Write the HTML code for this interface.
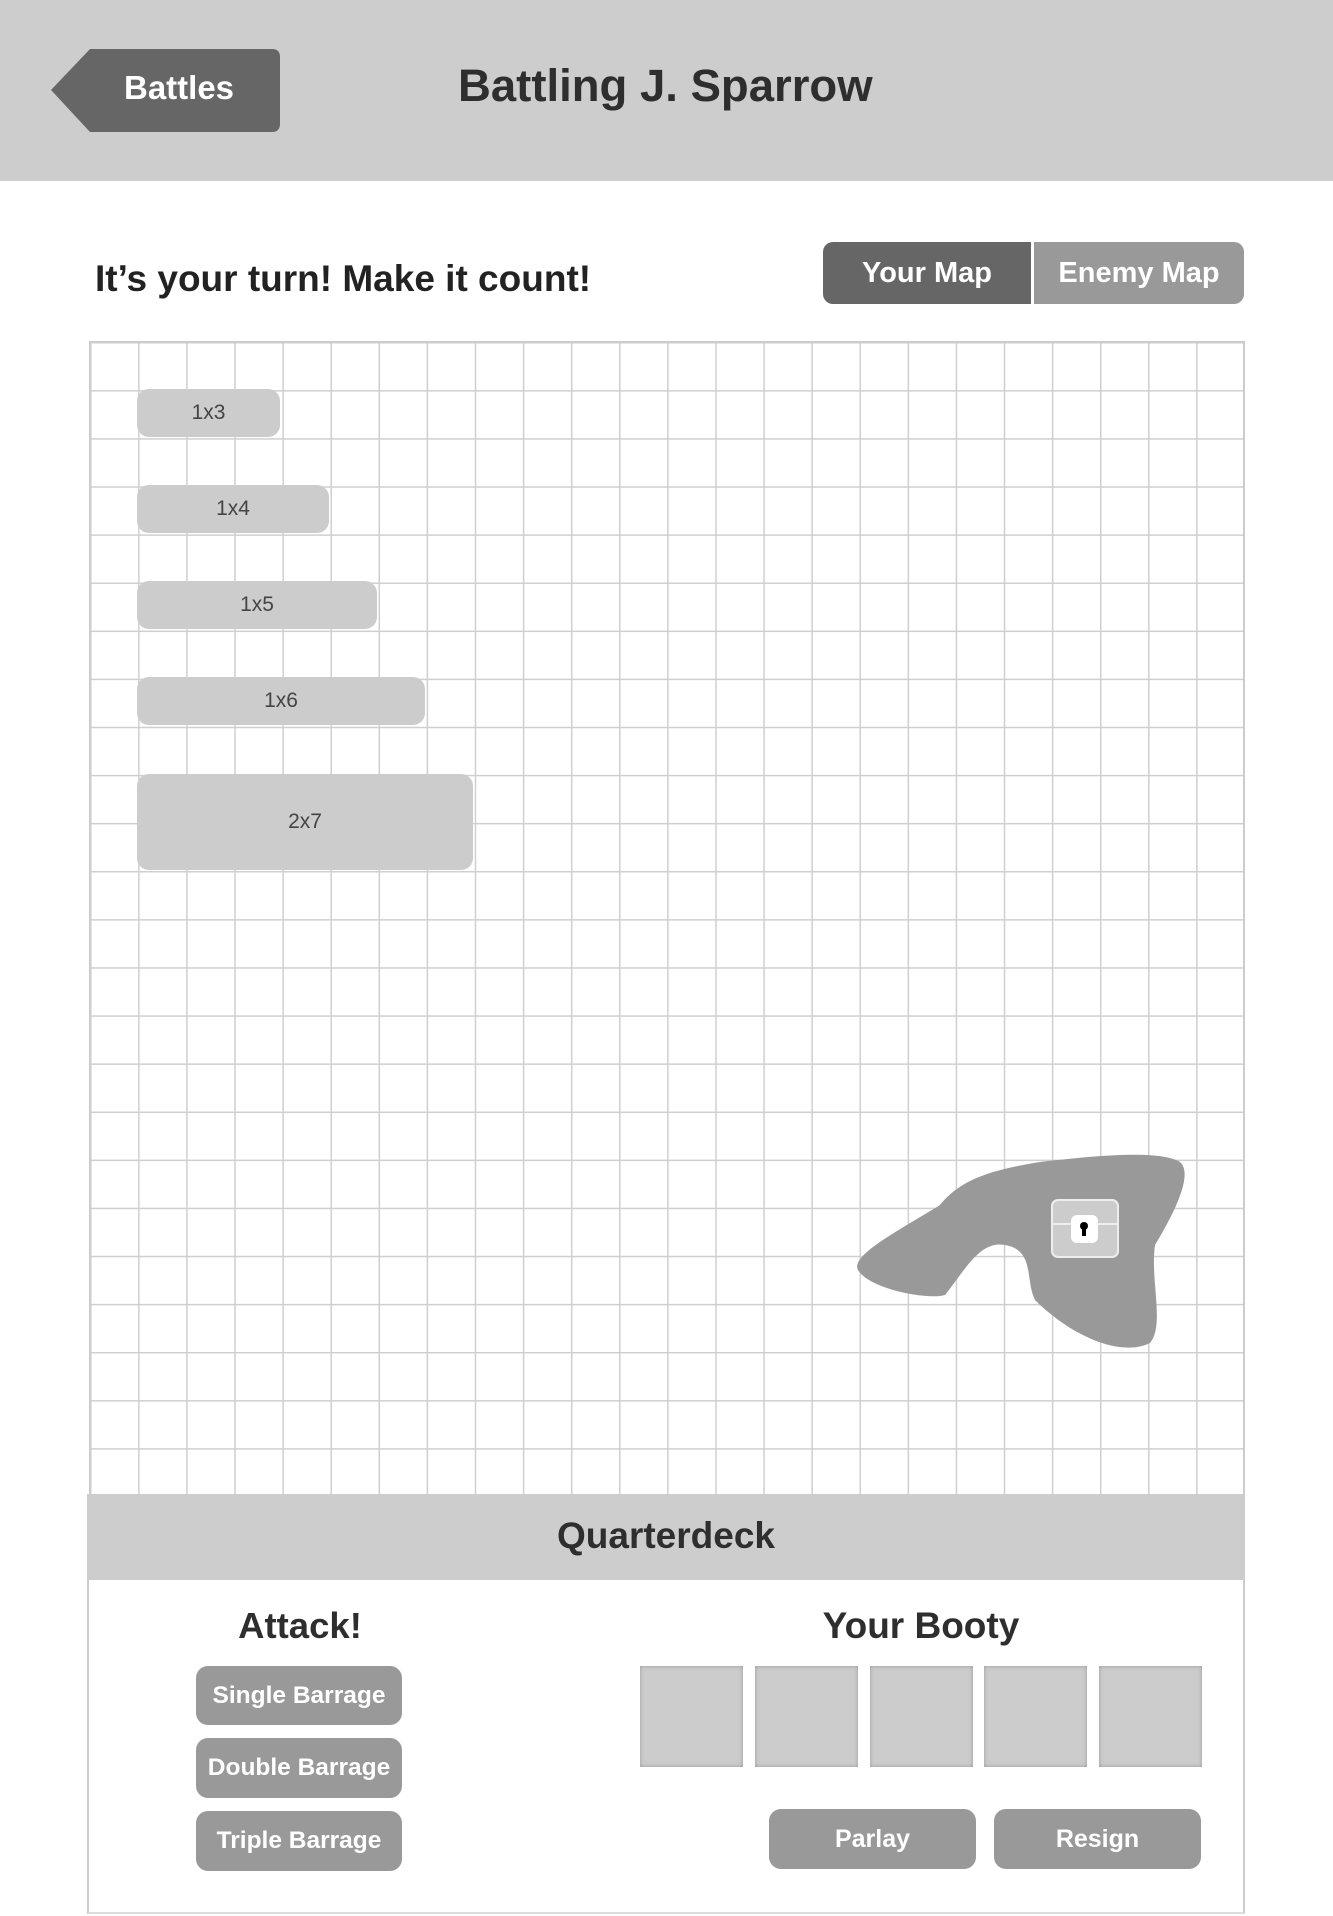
<!DOCTYPE html>
<html><head><meta charset="utf-8"><style>
*{margin:0;padding:0;box-sizing:border-box}
body{width:1333px;height:1916px;background:#fff;position:relative;font-family:"Liberation Sans",sans-serif;overflow:hidden}
.abs{position:absolute}
.hdr{left:0;top:0;width:1333px;height:181px;background:#cdcdcd}
.t{font-weight:bold;color:#2e2e2e;white-space:nowrap}
.btn{position:absolute;display:flex;align-items:center;justify-content:center;color:#fff;font-weight:bold;border-radius:12px;font-size:24.5px}
.ship{position:absolute;background:#cccccc;border-radius:12px;display:flex;align-items:center;justify-content:center;color:#444;font-size:21px}
.box{position:absolute;top:1666px;width:103px;height:101px;background:#cccccc;box-shadow:inset 0 0 4px #999}
</style></head><body>
<div class="abs hdr"></div>
<svg class="abs" style="left:0;top:0" width="300" height="181">
<path d="M51 90 L90 49 L272 49 Q280 49 280 57 L280 124 Q280 132 272 132 L90 132 Z" fill="#666"/>
</svg>
<div class="abs t" style="left:124px;top:69px;font-size:33px;color:#fff">Battles</div>
<div class="abs t" style="left:458px;top:60px;font-size:45.5px">Battling J. Sparrow</div>
<div class="abs t" style="left:95px;top:258px;font-size:37px;color:#222">It’s your turn! Make it count!</div>
<div class="btn" style="left:823px;top:242px;width:208px;height:62px;background:#666;border-radius:10px 0 0 10px;font-size:29px">Your Map</div>
<div class="btn" style="left:1034px;top:242px;width:210px;height:62px;background:#999;border-radius:0 10px 10px 0;font-size:29px">Enemy Map</div>
<div class="abs" style="left:89px;top:341px;width:1156px;height:1154px;border:2px solid #ccc;border-bottom:none;background-image:linear-gradient(to right,#cfcfcf 1.5px,transparent 1.5px),linear-gradient(to bottom,#cfcfcf 1.5px,transparent 1.5px);background-size:48.1px 48.1px;background-position:-1px -1px"></div>
<div class="ship" style="left:137px;top:389px;width:143px;height:48px">1x3</div>
<div class="ship" style="left:137px;top:485px;width:192px;height:48px">1x4</div>
<div class="ship" style="left:137px;top:581px;width:240px;height:48px">1x5</div>
<div class="ship" style="left:137px;top:677px;width:288px;height:48px">1x6</div>
<div class="ship" style="left:137px;top:774px;width:336px;height:96px">2x7</div>
<svg class="abs" style="left:0;top:0" width="1333" height="1500">
<path d="M858 1270 C850 1255 900 1230 940 1205 C960 1180 990 1170 1040 1162 C1100 1155 1160 1150 1180 1162 C1195 1175 1170 1220 1155 1245 C1150 1280 1165 1325 1150 1343 C1120 1358 1070 1335 1035 1300 C1025 1280 1035 1250 1005 1245 C980 1240 965 1270 945 1295 C930 1300 870 1290 858 1270 Z" fill="#999"/>
<rect x="1052" y="1200" width="66" height="57" rx="6" fill="#ccc" stroke="#eee" stroke-width="2"/>
<line x1="1052" y1="1224" x2="1118" y2="1224" stroke="#eee" stroke-width="2"/>
<rect x="1071" y="1215" width="27" height="28" rx="6" fill="#fff"/>
<circle cx="1084" cy="1226" r="4" fill="#000"/><rect x="1082" y="1228" width="4" height="8" fill="#000"/>
</svg>
<div class="abs" style="left:87px;top:1494px;width:1158px;border:2px solid #ccc;border-top:none;border-bottom:2px solid #ddd;height:420px"></div>
<div class="abs" style="left:87px;top:1494px;width:1158px;height:86px;background:#cdcdcd"></div>
<div class="abs t" style="left:87px;width:1158px;text-align:center;top:1515px;font-size:37px">Quarterdeck</div>
<div class="abs t" style="left:150px;width:300px;text-align:center;top:1605px;font-size:36.5px">Attack!</div>
<div class="abs t" style="left:771px;width:300px;text-align:center;top:1605px;font-size:37px">Your Booty</div>
<div class="btn" style="left:196px;top:1666px;width:206px;height:59px;background:#999">Single Barrage</div>
<div class="btn" style="left:196px;top:1738px;width:206px;height:60px;background:#999">Double Barrage</div>
<div class="btn" style="left:196px;top:1811px;width:206px;height:60px;background:#999">Triple Barrage</div>
<div class="box" style="left:640px"></div>
<div class="box" style="left:755px"></div>
<div class="box" style="left:870px"></div>
<div class="box" style="left:984px"></div>
<div class="box" style="left:1099px"></div>
<div class="btn" style="left:769px;top:1809px;width:207px;height:60px;background:#999;font-size:25px">Parlay</div>
<div class="btn" style="left:994px;top:1809px;width:207px;height:60px;background:#999;font-size:25px">Resign</div>
</body></html>
